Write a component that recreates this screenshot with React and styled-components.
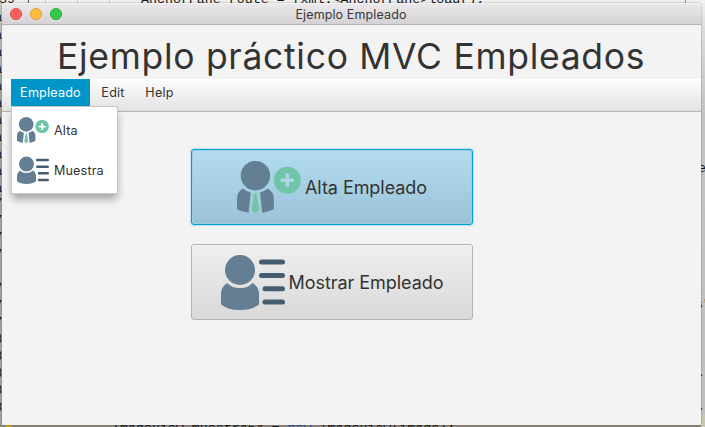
import React from "react";
import styled, { createGlobalStyle } from "styled-components";

const Global = createGlobalStyle`
  * { box-sizing: border-box; }
  html, body { margin: 0; overflow: hidden; }
  body { font-family: Inter, "Open Sans", sans-serif; color: #333; }
`;

const Desktop = styled.div`
  position: relative;
  width: 705px;
  height: 427px;
  padding: 3px 4px 2px 2px;
  overflow: hidden;
  background: linear-gradient(#f0f0ee 0, #f0f0ee 3px, #dcdcdc 30px, #c4c4c4 110px, #bfbfbf 414px, #c9c7ae 415px);
`;

const Gutter = styled.div`
  position: absolute;
  left: 0;
  top: 3px;
  width: 2px;
  bottom: 0;
  background: linear-gradient(#c9c9c3, #a5a59f 90px, #a5a59f);
`;

const BottomLine = styled.div`
  position: absolute;
  left: 0;
  right: 4px;
  bottom: 0;
  height: 2px;
  background: #8d8780;
`;

const Marker = styled.span`
  position: absolute;
  left: 5px;
  bottom: 0;
  width: 7px;
  height: 2px;
  background: #c9a51c;
`;

const Code = styled.pre`
  position: absolute;
  margin: 0;
  left: ${(p) => p.$x}px;
  top: ${(p) => p.$y}px;
  font: ${(p) => p.$size || 13.3}px/16px "Liberation Mono", monospace;
  color: #161616;
  b { font-weight: 400; color: #2949a0; }
`;

const Rule = styled.span`
  position: absolute;
  top: 0;
  left: ${(p) => p.$x}px;
  width: 1px;
  height: 3px;
  background: ${(p) => p.$color || "#c8c8c4"};
`;

const Window = styled.main`
  position: relative;
  display: flex;
  flex-direction: column;
  height: 422px;
  border-radius: 4px 4px 0 0;
  background: #f3f3f3;
  box-shadow: 0 0 2px rgba(0, 0, 0, 0.4);
`;

const TitleBar = styled.header`
  display: grid;
  grid-template-columns: 62px 1fr 62px;
  align-items: center;
  height: 22px;
  padding: 0 9px 0 8px;
  border-bottom: 1px solid #b2b0b2;
  border-radius: 4px 4px 0 0;
  background: linear-gradient(#ebe9eb, #d4d2d4);
  box-shadow: inset 0 1px #f5f4f5;
`;

const Lights = styled.div`
  display: flex;
  gap: 8px;
`;

const Light = styled.span`
  width: 12px;
  height: 12px;
  border-radius: 50%;
  border: 1px solid ${(p) => p.$edge};
  background: ${(p) => p.$fill};
`;

const WindowTitle = styled.span`
  padding-top: 2px;
  text-align: center;
  font-size: 12.5px;
  line-height: 20px;
  letter-spacing: 0.12px;
  color: #3a393a;
`;

const Heading = styled.h1`
  height: 54px;
  margin: 0;
  padding: 5px 0 0 55px;
  font-size: 35.5px;
  font-weight: 400;
  line-height: 54px;
  letter-spacing: 0.7px;
  white-space: nowrap;
`;

const MenuBar = styled.nav`
  position: relative;
  display: flex;
  height: 33px;
  padding: 0 9px 5px;
  border-bottom: 1px solid #b5b5b5;
  background: linear-gradient(#fdfdfd, #e3e3e3);
  box-shadow: inset 0 1px #fff;
`;

const MenuTitle = styled.button`
  width: ${(p) => p.$width}px;
  height: 27px;
  padding: 1px 0 0;
  border: 0;
  background: ${(p) => (p.$open ? "#0096c9" : "transparent")};
  color: ${(p) => (p.$open ? "#fff" : "#333")};
  font: 12.6px/26px Inter, sans-serif;
  letter-spacing: 0.2px;
`;

const Popup = styled.div`
  position: absolute;
  z-index: 1;
  left: 9px;
  top: 27px;
  width: 107px;
  height: 88px;
  padding: 3px 5px;
  border: 1px solid #c8c8c8;
  background: #fff;
  box-shadow: 0 6px 8px -1px rgba(0, 0, 0, 0.33);
`;

const MenuItem = styled.div`
  display: flex;
  align-items: center;
  gap: 5px;
  height: 40px;
  font-size: 12.6px;
  letter-spacing: 0.15px;
  white-space: nowrap;
`;

const Actions = styled.section`
  display: flex;
  flex-direction: column;
  gap: 19px;
  width: 282px;
  margin: 37px 0 0 189px;
`;

const ActionButton = styled.button`
  display: flex;
  align-items: center;
  justify-content: center;
  gap: 4px;
  height: 76px;
  padding: 0;
  border-radius: 3px;
  border: 1px solid ${(p) => (p.$active ? "#039ed3" : "#b3b3b3")};
  background: ${(p) => (p.$active ? "linear-gradient(#b3dcee, #9bc3d8)" : "linear-gradient(#efefef, #d9d9d9)")};
  box-shadow: ${(p) => (p.$active ? "0 0 1px 1px #b8e3f2, inset 0 0 0 1px #9fcce1" : "inset 0 1px #f5f5f5")};
  color: #333;
  font: 18px/24px Inter, sans-serif;
  letter-spacing: -0.06px;
  white-space: nowrap;
`;

const ActionLabel = styled.span`
  padding-top: 2px;
`;

const Glyph = styled.svg`
  display: block;
  flex: none;
  width: ${(p) => p.$size}px;
  height: ${(p) => p.$size}px;
`;

function AddPerson({ size }) {
  return (
    <Glyph $size={size} viewBox="0 0 64 64">
      <g fill="#647f94">
        <circle cx="18.4" cy="20.7" r="14.7" />
        <path d="M6 33.6Q9.4 36.6 13.8 37.4L11.6 57.8Q5 56.8 0 54.2V43.5Q0 37 6 33.6Z" />
        <path d="M30.8 33.6Q27.4 36.6 23 37.4L25.2 57.8Q31.8 56.8 36.8 54.2V43.5Q36.8 37 30.8 33.6Z" />
      </g>
      <path d="M17.2 38.3H19.6L22.2 55L18.4 58.3L14.6 55Z" fill="#70c5a8" />
      <circle cx="50.3" cy="25.2" r="13.5" fill="#70c5a8" />
      <path d="M50.3 19.8V30.6M44.9 25.2H55.7" stroke={size > 40 ? "#abd6e4" : "#fff"} strokeWidth="3.6" strokeLinecap="round" />
    </Glyph>
  );
}

function PersonList({ size }) {
  return (
    <Glyph $size={size} viewBox="0 0 64 64">
      <g fill="#647f94">
        <circle cx="19" cy="20" r="15" />
        <path d="M6.2 33Q11 38.2 19 38.2T31.6 33Q38 37 38 43.5V54.5Q31 60 19 60T0 54.5V43.5Q0 37 6.2 33Z" />
      </g>
      <path d="M40.5 12H61.5M40.5 25.4H61.5M44 38.7H61.5M44 52H61.5" fill="none" stroke="#465c70" strokeWidth="5" strokeLinecap="round" />
    </Glyph>
  );
}

const gutterRows = [10, 28, 45, 62, 79, 96, 113, 130, 147, 164, 181, 196, 213, 230, 247, 281, 298, 315, 332, 349, 366, 383, 400];

export default function App() {
  return (
    <>
      <Global />
      <Desktop>
        <Gutter />
        <BottomLine />
        <Marker />
        {gutterRows.map((y, i) => (
          <Code key={y} $x={-5} $y={y} $size={12}>{i < 11 ? "a" : i < 18 ? "7" : "8"}</Code>
        ))}
        <Code $x={-1} $y={-8}>39</Code>
        <Code $x={141} $y={-8}>{"AnchorPane route = fxml.<AnchorPane>load();"}</Code>
        <Rule $x={28} $color="#555" />
        <Rule $x={45} />
        <Rule $x={77} />
        <Rule $x={109} />
        <Rule $x={685} $color="#b080b0" />
        <Code $x={112} $y={421}>{"ImageView muestra64 = "}<b>new</b>{" ImageView(image);"}</Code>
        <Code $x={698} $y={161}>e</Code>
        <Code $x={695} $y={297}>s"</Code>
        <Code $x={697} $y={365}>.in</Code>
        <Code $x={697} $y={399}>.in</Code>
        <Window>
          <TitleBar>
            <Lights>
              <Light $fill="#ff605c" $edge="#df4b46" />
              <Light $fill="#ffbe3f" $edge="#dea034" />
              <Light $fill="#33c94b" $edge="#27aa35" />
            </Lights>
            <WindowTitle>Ejemplo Empleado</WindowTitle>
          </TitleBar>
          <Heading>Ejemplo práctico MVC Empleados</Heading>
          <MenuBar>
            <MenuTitle $open $width={79}>Empleado</MenuTitle>
            <MenuTitle $width={46}>Edit</MenuTitle>
            <MenuTitle $width={47}>Help</MenuTitle>
            <Popup>
              <MenuItem><AddPerson size={32} />Alta</MenuItem>
              <MenuItem><PersonList size={32} />Muestra</MenuItem>
            </Popup>
          </MenuBar>
          <Actions>
            <ActionButton $active><AddPerson size={64} /><ActionLabel>Alta Empleado</ActionLabel></ActionButton>
            <ActionButton><PersonList size={64} /><ActionLabel>Mostrar Empleado</ActionLabel></ActionButton>
          </Actions>
        </Window>
      </Desktop>
    </>
  );
}
